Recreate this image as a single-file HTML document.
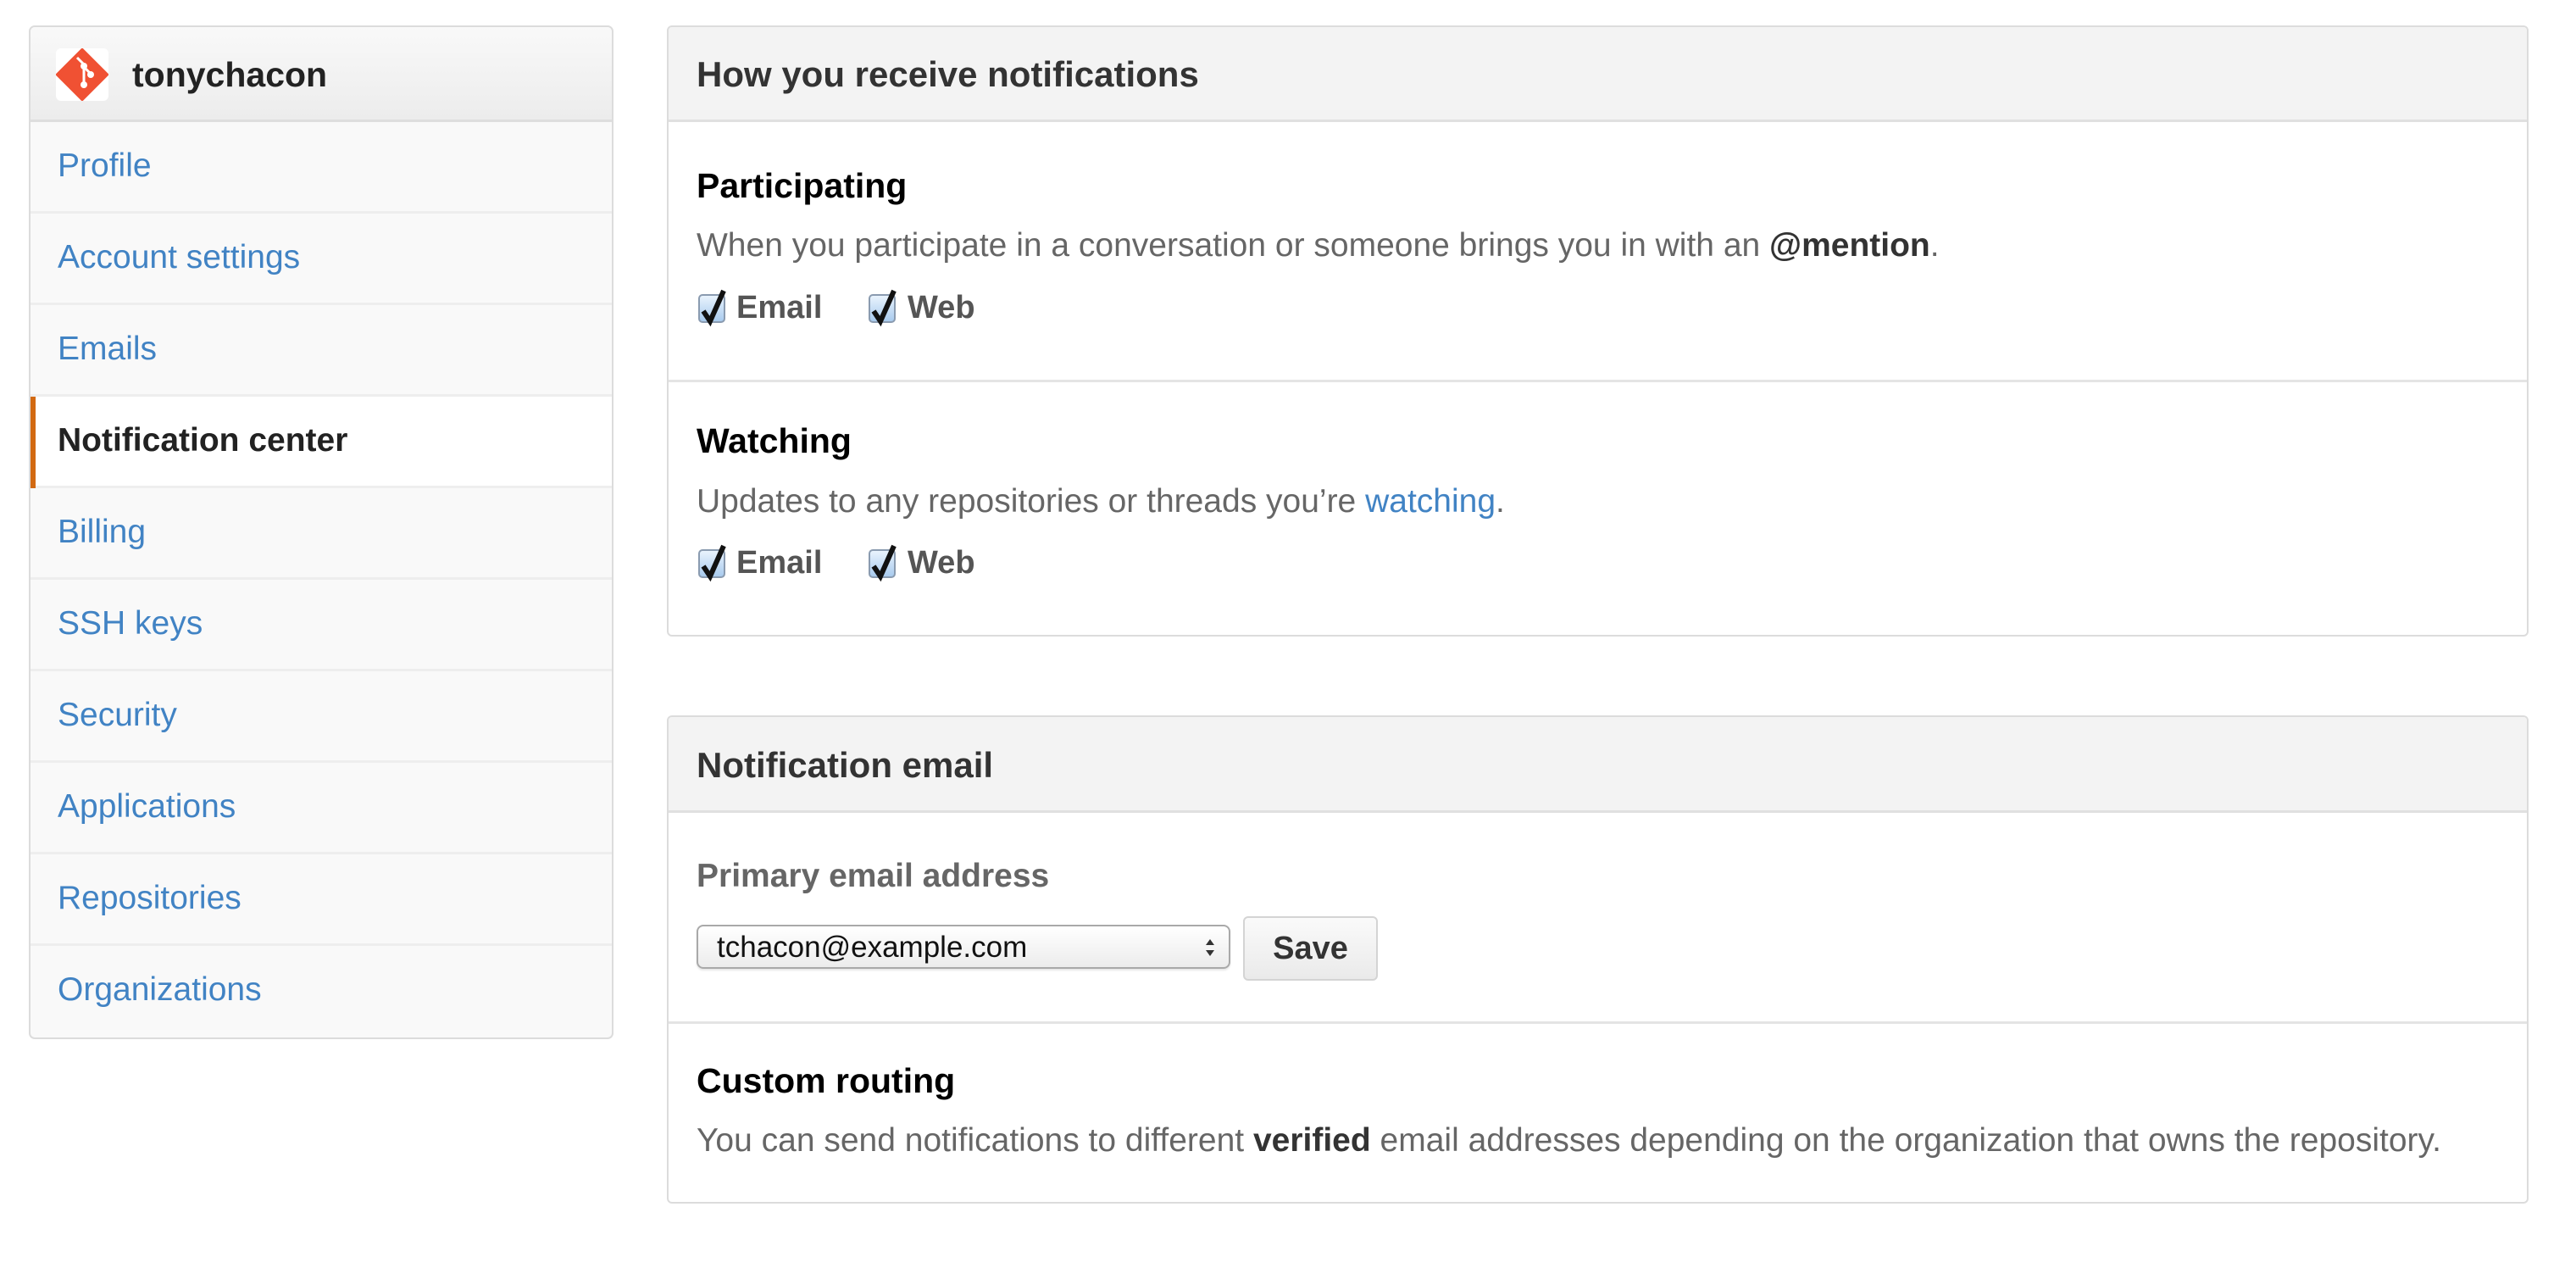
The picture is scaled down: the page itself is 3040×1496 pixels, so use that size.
<!DOCTYPE html>
<html><head><meta charset="utf-8"><style>
*{margin:0;padding:0;box-sizing:border-box}
body{width:3040px;height:1496px;background:#fff;font-family:"Liberation Sans",Arial,sans-serif;position:relative;overflow:hidden;color:#333}
.abs{position:absolute;white-space:nowrap}
.side{position:absolute;left:34px;top:30px;width:690px;height:1196px;border:2px solid #dcdcdc;border-radius:7px;background:#f9f9f9;overflow:hidden}
.shead{position:absolute;left:0;top:0;right:0;height:112px;background:linear-gradient(#f9f9f9,#ececec);border-bottom:3px solid #dedede}
.item{position:absolute;left:0;right:0;height:108px;border-bottom:3px solid #eeeeee;font-size:39px;color:#4183c4;padding-left:32px;line-height:104px}
.item.act{background:#fff;color:#222;font-weight:bold}
.item.act:before{content:"";position:absolute;left:0;top:0;bottom:-3px;width:6px;background:#d26911}
.panel{position:absolute;left:787px;width:2197px;border:2px solid #dcdcdc;border-radius:6px;background:#fff;overflow:hidden}
.phead{position:absolute;left:0;right:0;top:0;background:#f3f3f3;border-bottom:3px solid #e0e0e0;font-weight:bold;font-size:42px;color:#333;padding-left:33px}
.h{font-weight:bold;font-size:41px;color:#000}
.d{font-size:39px;color:#666}
.cb{position:absolute;width:32px;height:34px;border:2px solid #8a9bb0;border-radius:5px;background:linear-gradient(#e9f3fd,#a9cbee)}
.cb svg{position:absolute;left:-2px;top:-10px}
.lbl{font-size:38px;font-weight:bold;color:#555}
.line{position:absolute;left:0;right:0;height:3px;background:#e4e4e4}
</style></head><body>
<div class="side">
 <div class="shead">
  <svg class="abs" style="left:30px;top:25px" width="62" height="62" viewBox="0 0 62 62"><rect width="62" height="62" rx="6" fill="#fff"/><path d="M31 2 L60 31 L31 60 L2 31 Z" fill="#f05133" stroke="#f05133" stroke-width="4" stroke-linejoin="round"/><path d="M25 11 L33 19 V41 M33 22 L40 29" stroke="#fff" stroke-width="3" fill="none"/><circle cx="33" cy="21" r="4" fill="#fff"/><circle cx="33" cy="43" r="4" fill="#fff"/><circle cx="41" cy="31" r="4" fill="#fff"/></svg>
  <div class="abs" style="left:120px;top:33px;font-size:41px;font-weight:bold;color:#222">tonychacon</div>
 </div>
 <div class="item" style="top:112px">Profile</div>
 <div class="item" style="top:220px">Account settings</div>
 <div class="item" style="top:328px">Emails</div>
 <div class="item act" style="top:436px">Notification center</div>
 <div class="item" style="top:544px">Billing</div>
 <div class="item" style="top:652px">SSH keys</div>
 <div class="item" style="top:760px">Security</div>
 <div class="item" style="top:868px">Applications</div>
 <div class="item" style="top:976px">Repositories</div>
 <div class="item" style="top:1084px;border-bottom:none">Organizations</div>
</div>

<div class="panel" style="top:30px;height:721px">
 <div class="phead" style="height:112px;line-height:112px">How you receive notifications</div>
 <div class="abs h" style="left:33px;top:164px">Participating</div>
 <div class="abs d" style="left:33px;top:236px">When you participate in a conversation or someone brings you in with an <b style="color:#333">@mention</b>.</div>
 <div class="cb" style="left:35px;top:315px"><svg width="36" height="48" viewBox="0 0 36 48"><path d="M6 28 L14 40 L30 4" stroke="#111" stroke-width="6" fill="none"/></svg></div>
 <div class="abs lbl" style="left:80px;top:310px">Email</div>
 <div class="cb" style="left:236px;top:315px"><svg width="36" height="48" viewBox="0 0 36 48"><path d="M6 28 L14 40 L30 4" stroke="#111" stroke-width="6" fill="none"/></svg></div>
 <div class="abs lbl" style="left:282px;top:310px">Web</div>
 <div class="line" style="top:416px"></div>
 <div class="abs h" style="left:33px;top:465px">Watching</div>
 <div class="abs d" style="left:33px;top:538px">Updates to any repositories or threads you’re <span style="color:#4183c4">watching</span>.</div>
 <div class="cb" style="left:35px;top:616px"><svg width="36" height="48" viewBox="0 0 36 48"><path d="M6 28 L14 40 L30 4" stroke="#111" stroke-width="6" fill="none"/></svg></div>
 <div class="abs lbl" style="left:80px;top:611px">Email</div>
 <div class="cb" style="left:236px;top:616px"><svg width="36" height="48" viewBox="0 0 36 48"><path d="M6 28 L14 40 L30 4" stroke="#111" stroke-width="6" fill="none"/></svg></div>
 <div class="abs lbl" style="left:282px;top:611px">Web</div>
</div>

<div class="panel" style="top:844px;height:576px">
 <div class="phead" style="height:113px;line-height:113px">Notification email</div>
 <div class="abs" style="left:33px;top:166px;font-size:39px;font-weight:bold;color:#666">Primary email address</div>
 <div class="abs" style="left:33px;top:245px;width:630px;height:52px;border:2px solid #a9a9a9;border-radius:8px;background:linear-gradient(#fff,#ececec);box-shadow:0 2px 2px rgba(0,0,0,.1)">
  <div class="abs" style="left:22px;top:5px;font-size:35px;color:#111">tchacon@example.com</div>
  <svg class="abs" style="left:597px;top:13px" width="14" height="24" viewBox="0 0 14 24"><path d="M2 9 L7 2 L12 9 Z M2 15 L7 22 L12 15 Z" fill="#333"/></svg>
 </div>
 <div class="abs" style="left:678px;top:235px;width:159px;height:76px;border:2px solid #d4d4d4;border-radius:6px;background:linear-gradient(#fafafa,#eaeaea);font-size:38px;font-weight:bold;color:#333;text-align:center;line-height:72px">Save</div>
 <div class="line" style="top:359px"></div>
 <div class="abs h" style="left:33px;top:406px">Custom routing</div>
 <div class="abs d" style="left:33px;top:478px">You can send notifications to different <b style="color:#333">verified</b> email addresses depending on the organization that owns the repository.</div>
</div>
</body></html>
